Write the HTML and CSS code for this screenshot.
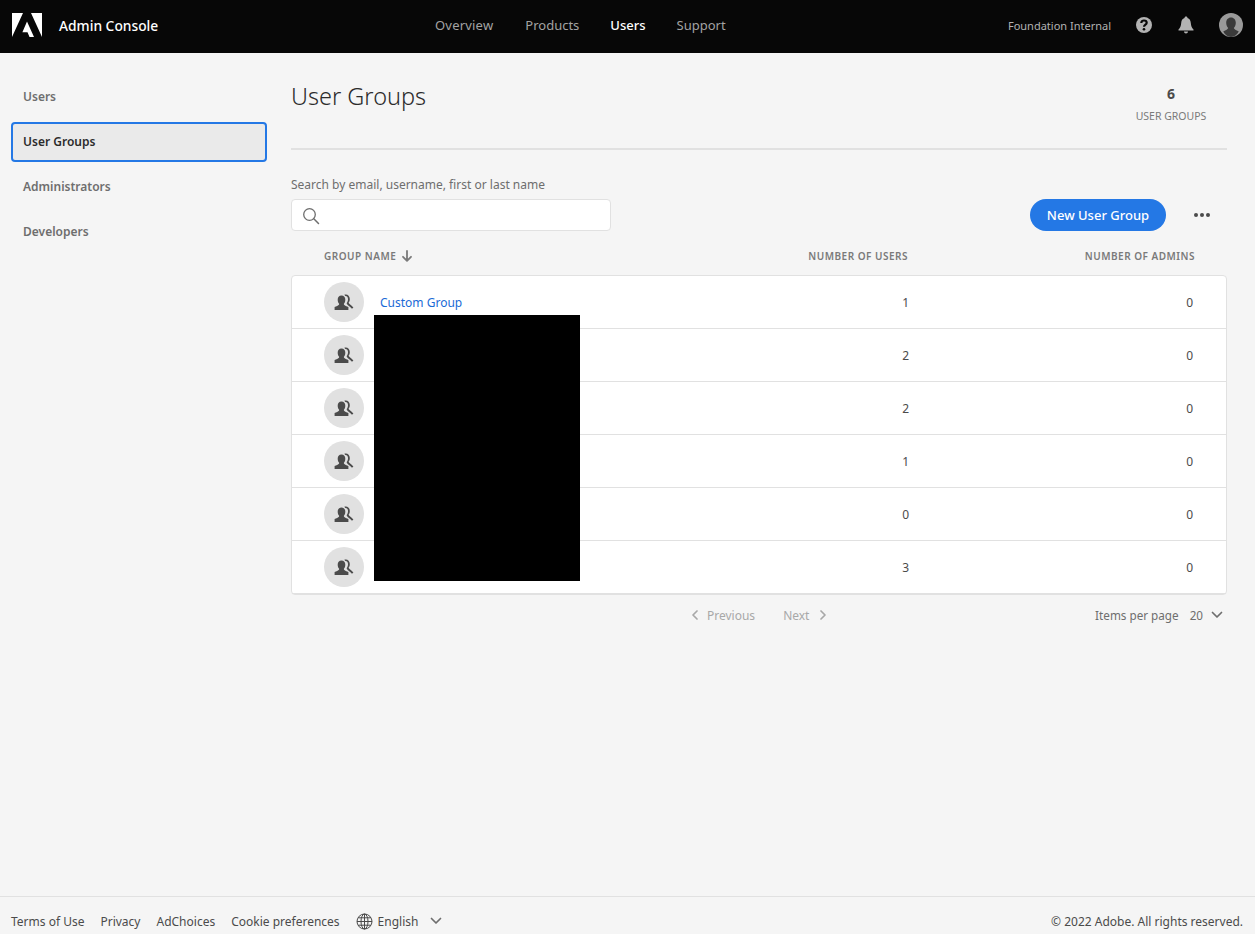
FILE: index.html
```html
<!DOCTYPE html>
<html lang="en">
<head>
    <meta charset="UTF-8">
    <title>User Groups | Admin Console</title>
    <link rel="stylesheet" href="styles.css">
</head>
<body>
    <svg class="defs" width="0" height="0">
        <symbol id="group" viewBox="0 0 40 40">
            <circle cx="20" cy="20" r="20" fill="#e1e1e1"/>
            <g transform="translate(0 1)" fill="#4b4b4b">
                <path d="M17.500 12.500C20 12.500 21.300 14.400 21.300 16.800C21.300 18.600 20.700 20 19.800 20.900C19.800 22 21.400 22.500 24.400 24V27H10.600V24C13.600 22.500 15.200 22 15.200 20.900C14.300 20 13.700 18.600 13.700 16.800C13.700 14.400 15 12.500 17.500 12.500Z"/>
                <path d="M20.300 11.800C23 10.600 25.800 12.700 25.800 16C25.800 17.600 25.300 18.900 24.600 19.800C24.800 21 27 21.800 29.400 24.600L28 25.800C25.600 23 23 22 22.600 20.200C23.600 19 24 17.600 24 16C24 13.900 22.700 12.700 21.300 12.900Z"/>
            </g>
        </symbol>
    </svg>

    <header class="topbar">
        <div class="brand">
            <svg class="logo" width="30" height="24" viewBox="0 0 30 24"><path fill="#fff" d="M0 0H11L0 24ZM19 0H30V24ZM15 8.500L22 24H17.500L15.500 19.300H10.400Z"/></svg>
            <span class="brand-name">Admin Console</span>
        </div>
        <nav class="topnav">
            <a>Overview</a>
            <a>Products</a>
            <a class="on">Users</a>
            <a>Support</a>
        </nav>
        <div class="topright">
            <span class="org">Foundation Internal</span>
            <svg class="help" width="18" height="18" viewBox="0 0 18 18"><circle cx="9" cy="9" r="8" fill="#b3b3b3"/><path fill="none" stroke="#070707" stroke-width="2.200" d="M6.300 7C6.300 5.300 7.500 4.500 9 4.500C10.600 4.500 11.700 5.400 11.700 6.800C11.700 8.600 9 8.700 9 10.800"/><circle cx="9" cy="13.200" r="1.300" fill="#070707"/></svg>
            <svg class="bell" width="16" height="18" viewBox="0 0 16 18"><path fill="#b3b3b3" d="M8 0.500C9 0.500 9.500 1.100 9.500 2C11.700 2.700 12.600 4.600 12.800 7C13 10 13.800 12 15.500 13.500V14.500H0.500V13.500C2.200 12 3 10 3.200 7C3.400 4.600 4.300 2.700 6.500 2C6.500 1.100 7 0.500 8 0.500ZM6 15.500H10C10 16.700 9.100 17.500 8 17.500C6.900 17.500 6 16.700 6 15.500Z"/></svg>
            <svg class="avatar" width="24" height="24" viewBox="0 0 24 24"><circle cx="12" cy="12" r="12" fill="#9a9a9a"/><path fill="#3a3a3a" d="M12 4.500C15 4.500 16.800 6.800 16.800 9.800C16.800 12 16 13.800 14.800 15C15 16.200 17 17 19.800 18.500C18 21.800 15.200 24 12 24C8.800 24 6 21.800 4.200 18.500C7 17 9 16.200 9.200 15C8 13.800 7.200 12 7.200 9.800C7.200 6.800 9 4.500 12 4.500Z"/></svg>
        </div>
    </header>

    <div class="page">
        <aside class="sidenav">
            <a class="sideitem">Users</a>
            <a class="sideitem on">User Groups</a>
            <a class="sideitem">Administrators</a>
            <a class="sideitem">Developers</a>
        </aside>

        <main class="content">
            <div class="titlebar">
                <h1>User Groups</h1>
                <div class="stat">
                    <div class="stat-num">6</div>
                    <div class="stat-label">USER GROUPS</div>
                </div>
            </div>

            <div class="tools">
                <div class="search">
                    <label class="search-label">Search by email, username, first or last name</label>
                    <div class="search-box">
                        <svg width="18" height="18" viewBox="0 0 18 18"><circle cx="7.500" cy="7.500" r="5.800" fill="none" stroke="#6e6e6e" stroke-width="1.300"/><path stroke="#6e6e6e" stroke-width="1.500" stroke-linecap="round" d="M11.800 11.800L16.500 16.500"/></svg>
                    </div>
                </div>
                <div class="actions">
                    <button class="btn-new">New User Group</button>
                    <span class="more"><i></i><i></i><i></i></span>
                </div>
            </div>

            <div class="thead">
                <div class="th-name">GROUP NAME
                    <svg width="12" height="12" viewBox="0 0 12 12"><path fill="none" stroke="#7a7a7a" stroke-width="1.800" stroke-linecap="round" stroke-linejoin="round" d="M6 1V10.500M2 6.800L6 10.800L10 6.800"/></svg>
                </div>
                <div class="num">NUMBER OF USERS</div>
                <div class="num">NUMBER OF ADMINS</div>
            </div>

            <div class="table">
                <div class="row">
                    <div class="name"><svg class="group-icon" width="40" height="40"><use href="#group"/></svg><a class="group-link">Custom Group</a></div>
                    <div class="num">1</div>
                    <div class="num">0</div>
                </div>
                <div class="row">
                    <div class="name"><svg class="group-icon" width="40" height="40"><use href="#group"/></svg></div>
                    <div class="num">2</div>
                    <div class="num">0</div>
                </div>
                <div class="row">
                    <div class="name"><svg class="group-icon" width="40" height="40"><use href="#group"/></svg></div>
                    <div class="num">2</div>
                    <div class="num">0</div>
                </div>
                <div class="row">
                    <div class="name"><svg class="group-icon" width="40" height="40"><use href="#group"/></svg></div>
                    <div class="num">1</div>
                    <div class="num">0</div>
                </div>
                <div class="row">
                    <div class="name"><svg class="group-icon" width="40" height="40"><use href="#group"/></svg></div>
                    <div class="num">0</div>
                    <div class="num">0</div>
                </div>
                <div class="row">
                    <div class="name"><svg class="group-icon" width="40" height="40"><use href="#group"/></svg></div>
                    <div class="num">3</div>
                    <div class="num">0</div>
                </div>
                <div class="redact"></div>
            </div>

            <div class="pager">
                <div class="pager-links">
                    <span class="pager-link"><svg width="8" height="10" viewBox="0 0 8 10"><path fill="none" stroke="#a8a8a8" stroke-width="1.700" stroke-linecap="round" stroke-linejoin="round" d="M6 1L2 5L6 9"/></svg>Previous</span>
                    <span class="pager-link">Next<svg width="8" height="10" viewBox="0 0 8 10"><path fill="none" stroke="#a8a8a8" stroke-width="1.700" stroke-linecap="round" stroke-linejoin="round" d="M2 1L6 5L2 9"/></svg></span>
                </div>
                <div class="perpage">
                    <span>Items per page</span>
                    <span>20</span>
                    <svg width="12" height="8" viewBox="0 0 12 8"><path fill="none" stroke="#6e6e6e" stroke-width="1.700" stroke-linecap="round" stroke-linejoin="round" d="M1.500 1.500L6 6L10.500 1.500"/></svg>
                </div>
            </div>
        </main>
    </div>

    <footer class="footer">
        <div class="footlinks">
            <a>Terms of Use</a>
            <a>Privacy</a>
            <a>AdChoices</a>
            <a>Cookie preferences</a>
            <span class="lang">
                <svg width="17" height="17" viewBox="0 0 17 17"><g fill="none" stroke="#4b4b4b" stroke-width="1"><circle cx="8.500" cy="8.500" r="7.500"/><ellipse cx="8.500" cy="8.500" rx="3.500" ry="7.500"/><path d="M8.500 1V16M1 8.500H16M2 4.800H15M2 12.200H15"/></g></svg>
                English
                <svg class="lang-arrow" width="12" height="8" viewBox="0 0 12 8"><path fill="none" stroke="#6e6e6e" stroke-width="1.700" stroke-linecap="round" stroke-linejoin="round" d="M1.500 1.500L6 6L10.500 1.500"/></svg>
            </span>
        </div>
        <div class="copy">© 2022 Adobe. All rights reserved.</div>
    </footer>
</body>
</html>
```

FILE: styles.css
```css
*{margin:0;padding:0;box-sizing:border-box;}
html,body{height:100%;}
body{
    display:flex;
    flex-direction:column;
    height:934px;
    overflow:hidden;
    background:#f5f5f5;
    font-family:"Noto Sans","Open Sans",sans-serif;
    font-size:12px;
    color:#4b4b4b;
}
.defs{display:none;}

/* top bar */
.topbar{
    height:53px;
    flex:none;
    display:flex;
    align-items:center;
    background:#070707;
    position:relative;
    padding:0 12px 3px;
}
.brand{
    width:423px;
    display:flex;
    align-items:center;
}
.logo{margin-right:17px;}
.brand-name{
    color:#fff;
    font-size:13.800px;
    font-weight:500;
}
.topnav{
    display:flex;
    gap:31px;
    font-size:13px;
}
.topnav a{color:#a3a3a3;}
.topnav a:first-child{letter-spacing:.2px;margin-right:1px;}
.topnav a.on{color:#fff;font-weight:500;}
.topright{
    margin-left:auto;
    display:flex;
    align-items:center;
}
.org{
    color:#b3b3b3;
    font-size:11px;
    margin-right:24px;
}
.help{margin-right:25px;}
.bell{margin-right:25px;}

/* page */
.page{
    flex:1;
    display:flex;
}
.sidenav{
    width:291px;
    flex:none;
    padding:24px 24px 0 11px;
    display:flex;
    flex-direction:column;
    gap:5px;
}
.sideitem{
    height:40px;
    line-height:36px;
    padding-left:10px;
    border:2px solid transparent;
    border-radius:4px;
    font-weight:600;
    color:#6e6e6e;
}
.sideitem.on{
    background:#eaeaea;
    border-color:#2478e5;
    color:#2c2c2c;
}
.content{
    flex:1;
    padding-right:28px;
}
.titlebar{
    height:97px;
    display:flex;
    justify-content:space-between;
    border-bottom:2px solid #e1e1e1;
}
h1{
    font-size:23.500px;
    font-weight:300;
    color:#2c2c2c;
    margin-top:24px;
    line-height:38px;
}
.stat{
    width:112px;
    padding-top:32px;
    text-align:center;
}
.stat-num{
    font-size:14px;
    font-weight:700;
    line-height:18px;
}
.stat-label{
    font-size:10.500px;
    color:#7a7a7a;
    line-height:16px;
    margin-top:5px;
}
.tools{
    display:flex;
    justify-content:space-between;
    align-items:flex-end;
    margin-top:25px;
}
.search-label{
    display:block;
    font-size:12px;
    line-height:20px;
    margin-bottom:4px;
    color:#6e6e6e;
}
.search-box{
    width:320px;
    height:32px;
    background:#fff;
    border:1px solid #e1e1e1;
    border-radius:4px;
    padding:7px 0 0 10px;
}
.actions{
    display:flex;
    align-items:center;
}
.btn-new{
    width:136px;
    height:32px;
    border:none;
    border-radius:16px;
    background:#2478e5;
    color:#fff;
    font-family:inherit;
    font-size:13px;
    font-weight:500;
}
.more{
    display:flex;
    gap:2px;
    margin:0 17px 0 28px;
}
.more i{
    width:4px;
    height:4px;
    border-radius:50%;
    background:#4b4b4b;
}

/* table */
.thead,.row{
    display:grid;
    grid-template-columns:1fr 180px 284px;
    align-items:center;
}
.thead{
    grid-template-columns:1fr 180px 287px;
    height:44px;
    padding:6px 32px 0 33px;
    font-size:10px;
    font-weight:600;
    letter-spacing:.5px;
    color:#7a7a7a;
}
.th-name{
    display:flex;
    align-items:center;
    gap:5px;
}
.num{text-align:right;}
.table{
    position:relative;
    background:#fff;
    border:1px solid #e1e1e1;
    border-radius:4px;
}
.row{
    height:53px;
    padding:0 33px 0 32px;
    border-bottom:1px solid #e1e1e1;
    font-size:12px;
}
.row:last-of-type{
    height:52px;
    border-bottom:none;
}
.name{
    display:flex;
    align-items:center;
}
.group-icon{margin-right:16px;}
.group-link{color:#1a6ad6;}
.redact{
    position:absolute;
    left:82px;
    top:39px;
    width:206px;
    height:266px;
    background:#000;
}

/* pager */
.pager{
    display:flex;
    align-items:center;
    height:40px;
    position:relative;
}
.pager-links{
    margin-left:400px;
    display:flex;
    gap:28px;
}
.pager-link{
    display:flex;
    align-items:center;
    gap:8px;
    color:#a8a8a8;
}
.pager-link:last-child{gap:10px;}
.perpage{
    margin-left:auto;
    display:flex;
    align-items:center;
    gap:11px;
    padding-right:4px;
    color:#6e6e6e;
    font-size:11.700px;
}
.perpage svg{margin-left:-3px;}

/* footer */
.footer{
    height:38px;
    flex:none;
    display:flex;
    justify-content:space-between;
    align-items:center;
    padding:11px 12px 0 11px;
    border-top:1px solid #e1e1e1;
    font-size:12px;
}
.footlinks{
    display:flex;
    align-items:center;
    gap:16px;
}
.lang{
    display:flex;
    align-items:center;
    gap:5px;
}
.lang-arrow{margin-left:7px;}
```
